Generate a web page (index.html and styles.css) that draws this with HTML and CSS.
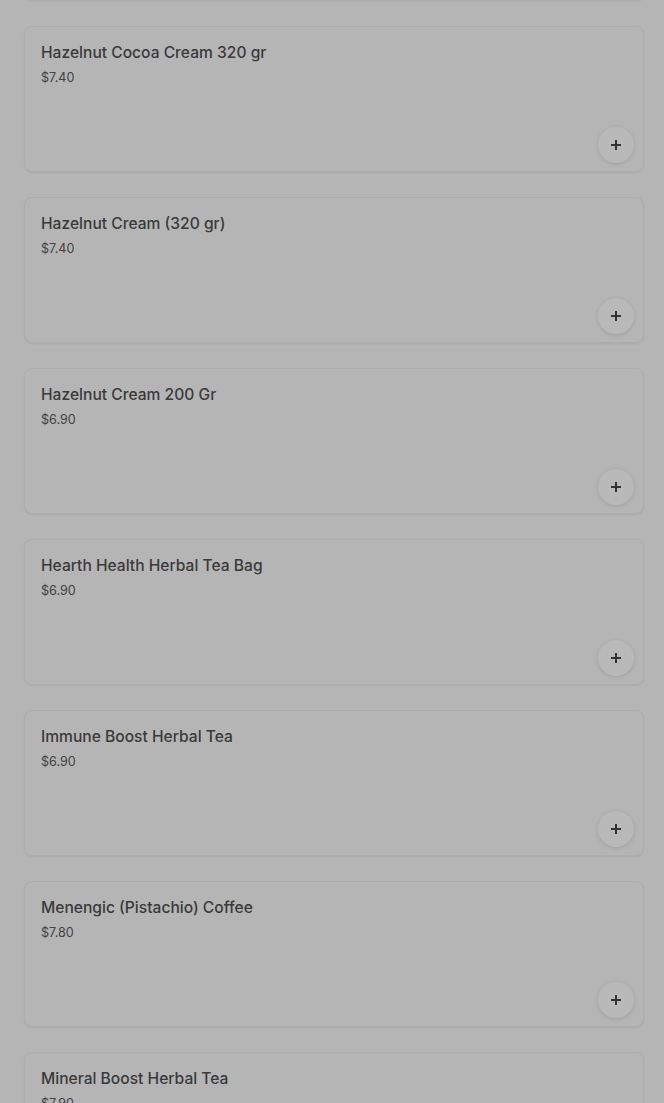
FILE: index.html
```html
<!DOCTYPE html>
<html lang="en">
<head>
  <meta charset="UTF-8" />
  <meta name="viewport" content="width=device-width, initial-scale=1.0" />
  <title>Products</title>
  <link rel="stylesheet" href="styles.css">
</head>
<body>
  <div class="list">
    <div class="card">
      <div class="name">Hazelnut Cocoa Cream 200 gr</div>
      <div class="price">$5.90</div>
      <div class="actions"><button class="add"><svg width="12" height="12" viewBox="0 0 12 12"><path d="M6 1v10M1 6h10" stroke="#333" stroke-width="2"/></svg></button></div>
    </div>
    <div class="card">
      <div class="name">Hazelnut Cocoa Cream 320 gr</div>
      <div class="price">$7.40</div>
      <div class="actions"><button class="add"><svg width="12" height="12" viewBox="0 0 12 12"><path d="M6 1v10M1 6h10" stroke="#333" stroke-width="2"/></svg></button></div>
    </div>
    <div class="card">
      <div class="name">Hazelnut Cream (320 gr)</div>
      <div class="price">$7.40</div>
      <div class="actions"><button class="add"><svg width="12" height="12" viewBox="0 0 12 12"><path d="M6 1v10M1 6h10" stroke="#333" stroke-width="2"/></svg></button></div>
    </div>
    <div class="card">
      <div class="name">Hazelnut Cream 200 Gr</div>
      <div class="price">$6.90</div>
      <div class="actions"><button class="add"><svg width="12" height="12" viewBox="0 0 12 12"><path d="M6 1v10M1 6h10" stroke="#333" stroke-width="2"/></svg></button></div>
    </div>
    <div class="card">
      <div class="name">Hearth Health Herbal Tea Bag</div>
      <div class="price">$6.90</div>
      <div class="actions"><button class="add"><svg width="12" height="12" viewBox="0 0 12 12"><path d="M6 1v10M1 6h10" stroke="#333" stroke-width="2"/></svg></button></div>
    </div>
    <div class="card">
      <div class="name">Immune Boost Herbal Tea</div>
      <div class="price">$6.90</div>
      <div class="actions"><button class="add"><svg width="12" height="12" viewBox="0 0 12 12"><path d="M6 1v10M1 6h10" stroke="#333" stroke-width="2"/></svg></button></div>
    </div>
    <div class="card">
      <div class="name">Menengic (Pistachio) Coffee</div>
      <div class="price">$7.80</div>
      <div class="actions"><button class="add"><svg width="12" height="12" viewBox="0 0 12 12"><path d="M6 1v10M1 6h10" stroke="#333" stroke-width="2"/></svg></button></div>
    </div>
    <div class="card">
      <div class="name">Mineral Boost Herbal Tea</div>
      <div class="price">$7.90</div>
      <div class="actions"><button class="add"><svg width="12" height="12" viewBox="0 0 12 12"><path d="M6 1v10M1 6h10" stroke="#333" stroke-width="2"/></svg></button></div>
    </div>
  </div>
</body>
</html>
```

FILE: styles.css
```css
* {
  box-sizing: border-box;
  margin: 0;
  padding: 0;
  font-family: 'Inter', sans-serif;
}

body {
  background: #b5b5b5;
  overflow: hidden;
}

.list {
  display: flex;
  flex-direction: column;
  gap: 25px;
  padding: 0 20px 0 24px;
  margin-top: -145px;
}

.card {
  display: flex;
  flex-direction: column;
  min-height: 146px;
  padding: 16px 9px 8px 16px;
  background: #b5b5b5;
  border: 1px solid #adadad;
  border-radius: 8px;
  box-shadow: 0 1px 2px rgba(0, 0, 0, 0.06);
}

.name {
  font-size: 15.6px;
  font-weight: 500;
  line-height: 20px;
  color: #3a3a3a;
}

.price {
  margin-top: 7px;
  font-size: 12.6px;
  line-height: 16px;
  color: #424242;
}

.actions {
  margin-top: auto;
  display: flex;
  justify-content: flex-end;
}

.add {
  width: 36px;
  height: 36px;
  border: none;
  border-radius: 50%;
  background: #b9b9b9;
  box-shadow: 0 1px 4px rgba(0, 0, 0, 0.12);
  display: flex;
  align-items: center;
  justify-content: center;
  cursor: pointer;
}
```
